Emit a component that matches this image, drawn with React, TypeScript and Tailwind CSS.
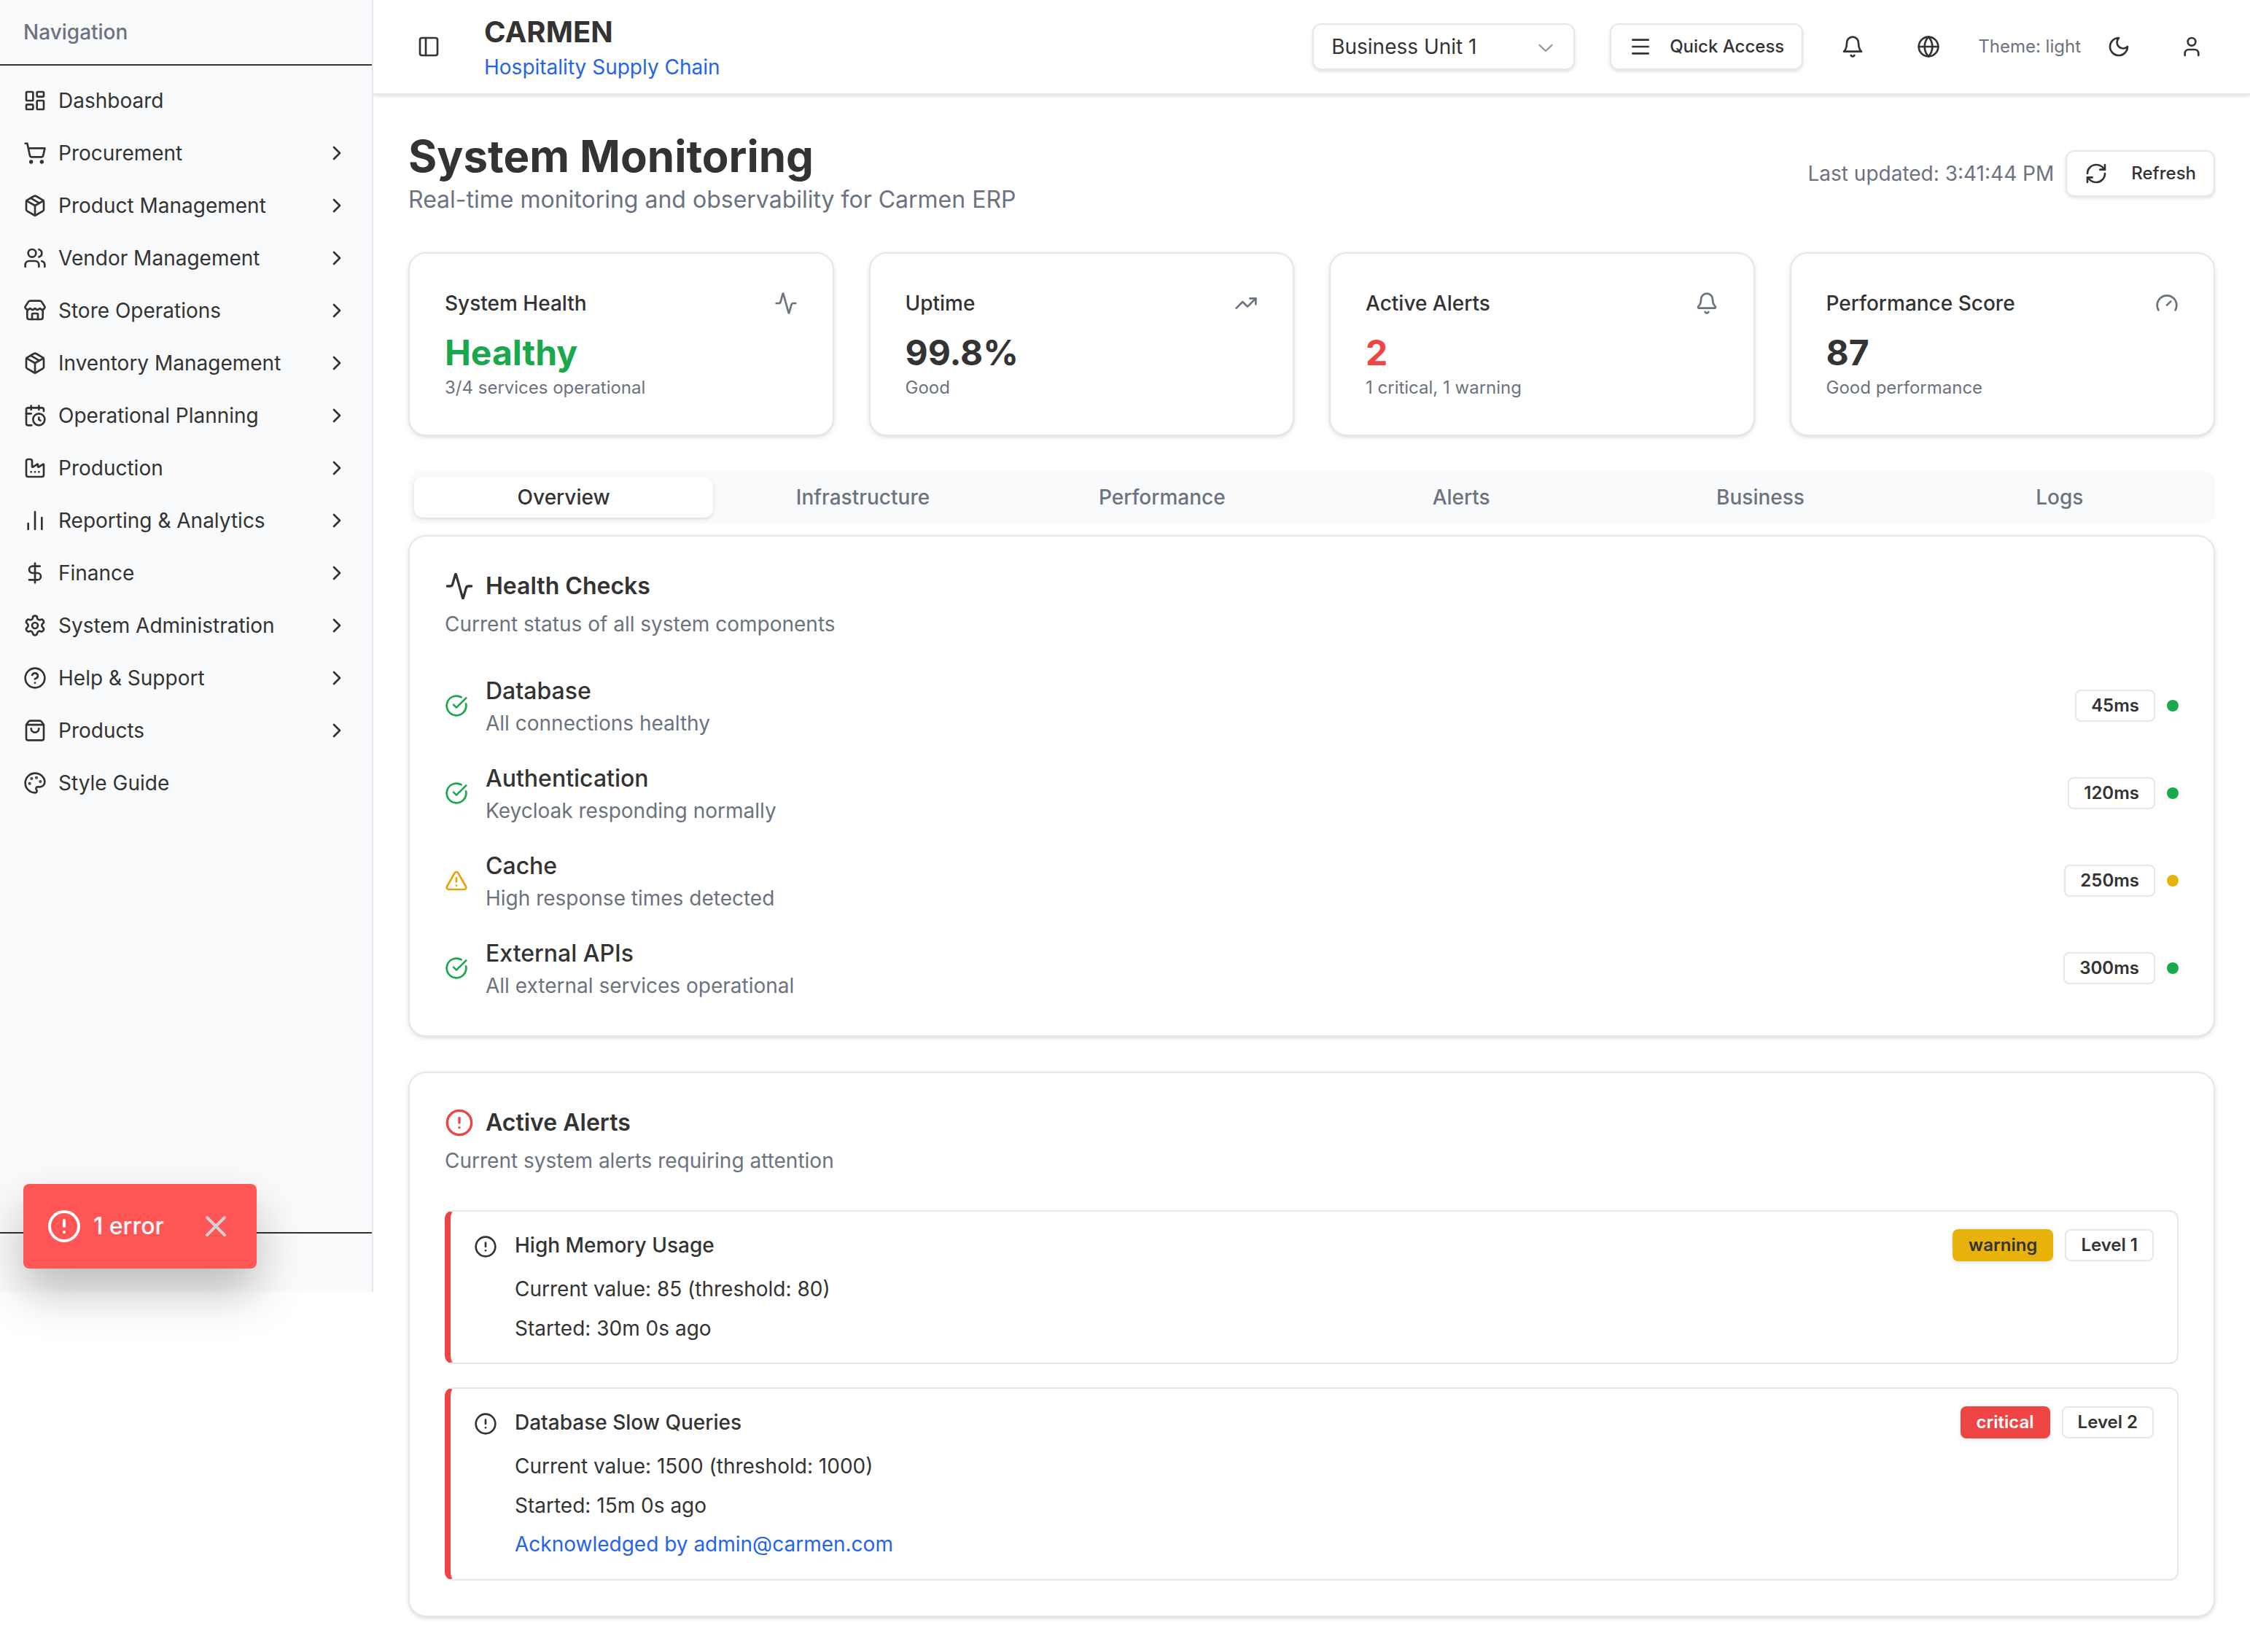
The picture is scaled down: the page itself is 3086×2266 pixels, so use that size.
import type { ReactNode } from "react";
import {
  Activity,
  Bell,
  CalendarClock,
  ChartNoAxesColumn,
  ChevronRight,
  CircleAlert,
  CircleCheckBig,
  CircleHelp,
  DollarSign,
  Factory,
  Gauge,
  Globe,
  LayoutDashboard,
  Menu,
  Moon,
  Package,
  Palette,
  PanelLeft,
  RefreshCw,
  Settings,
  ShoppingBag,
  ShoppingCart,
  Store,
  TrendingUp,
  TriangleAlert,
  User,
  Users,
  X,
} from "lucide-react";

type Icon = typeof Activity;

const navItems: { label: string; icon: Icon; expandable: boolean }[] = [
  { label: "Dashboard", icon: LayoutDashboard, expandable: false },
  { label: "Procurement", icon: ShoppingCart, expandable: true },
  { label: "Product Management", icon: Package, expandable: true },
  { label: "Vendor Management", icon: Users, expandable: true },
  { label: "Store Operations", icon: Store, expandable: true },
  { label: "Inventory Management", icon: Package, expandable: true },
  { label: "Operational Planning", icon: CalendarClock, expandable: true },
  { label: "Production", icon: Factory, expandable: true },
  { label: "Reporting & Analytics", icon: ChartNoAxesColumn, expandable: true },
  { label: "Finance", icon: DollarSign, expandable: true },
  { label: "System Administration", icon: Settings, expandable: true },
  { label: "Help & Support", icon: CircleHelp, expandable: true },
  { label: "Products", icon: ShoppingBag, expandable: true },
  { label: "Style Guide", icon: Palette, expandable: false },
];

const stats: { title: string; value: string; note: string; icon: Icon; tone: string }[] = [
  { title: "System Health", value: "Healthy", note: "3/4 services operational", icon: Activity, tone: "text-[#1aa84d]" },
  { title: "Uptime", value: "99.8%", note: "Good", icon: TrendingUp, tone: "text-[#333333]" },
  { title: "Active Alerts", value: "2", note: "1 critical, 1 warning", icon: Bell, tone: "text-[#ef4444]" },
  { title: "Performance Score", value: "87", note: "Good performance", icon: Gauge, tone: "text-[#333333]" },
];

const tabs = ["Overview", "Infrastructure", "Performance", "Alerts", "Business", "Logs"];

const checks = [
  { name: "Database", note: "All connections healthy", latency: "45ms", ok: true },
  { name: "Authentication", note: "Keycloak responding normally", latency: "120ms", ok: true },
  { name: "Cache", note: "High response times detected", latency: "250ms", ok: false },
  { name: "External APIs", note: "All external services operational", latency: "300ms", ok: true },
];

const alerts = [
  {
    title: "High Memory Usage",
    value: "Current value: 85 (threshold: 80)",
    started: "Started: 30m 0s ago",
    acknowledged: "",
    severity: "warning",
    severityStyle: "bg-[#e8b20a] text-[#333333]",
    level: "Level 1",
  },
  {
    title: "Database Slow Queries",
    value: "Current value: 1500 (threshold: 1000)",
    started: "Started: 15m 0s ago",
    acknowledged: "Acknowledged by admin@carmen.com",
    severity: "critical",
    severityStyle: "bg-[#ef4444] text-white",
    level: "Level 2",
  },
];

function Sidebar() {
  return (
    <aside className="relative flex h-[1772px] w-[512px] shrink-0 flex-col border-r-2 border-[#e5e7eb] bg-[#f9fafb]">
      <div className="border-b-2 border-[#333333] px-8 py-6 text-[28px] leading-10 font-medium text-[#6b7280]">
        Navigation
      </div>
      <nav className="flex flex-1 flex-col gap-2 p-4">
        {navItems.map(({ label, icon: ItemIcon, expandable }) => (
          <a key={label} href="#" className="flex h-16 items-center gap-4 px-4 text-[28px] leading-10">
            <ItemIcon className="size-8" />
            <span className="flex-1">{label}</span>
            {expandable && <ChevronRight className="size-8" />}
          </a>
        ))}
      </nav>
      <div className="h-[82px] border-t-2 border-[#333333]" />
      <div
        role="status"
        className="absolute bottom-8 left-8 flex h-[116px] w-80 items-center gap-4 rounded-lg bg-[#ff5555] pl-8 text-[32px] leading-12 font-medium text-white shadow-[0_32px_64px_rgba(0,0,0,0.25)]"
      >
        <CircleAlert className="size-12" />
        <span className="flex-1">1 error</span>
        <button type="button" aria-label="Dismiss error" className="pr-8 text-[#d1d1d1]">
          <X className="size-12" />
        </button>
      </div>
    </aside>
  );
}

function IconButton({ label, className, children }: { label: string; className: string; children: ReactNode }) {
  return (
    <button type="button" aria-label={label} className={`flex items-center justify-center ${className}`}>
      {children}
    </button>
  );
}

function Header() {
  return (
    <header className="flex h-[130px] items-center border-b-2 border-[#e5e7eb] px-12 shadow-[0_2px_4px_rgba(0,0,0,0.12)]">
      <IconButton label="Toggle sidebar" className="size-14">
        <PanelLeft className="size-8" />
      </IconButton>
      <div className="ml-12">
        <div className="text-[40px] leading-14 font-bold">CARMEN</div>
        <a href="#" className="block text-[28px] leading-10 text-[#2563eb]">
          Hospitality Supply Chain
        </a>
      </div>
      <div className="ml-auto flex items-center gap-8">
        <div className="relative mr-4">
          <select
            aria-label="Business unit"
            className="h-16 w-[360px] appearance-none rounded-xl border-2 border-[#e5e7eb] bg-white px-6 text-[28px] shadow-[0_2px_4px_rgba(0,0,0,0.12)]"
          >
            <option>Business Unit 1</option>
          </select>
          <svg
            viewBox="0 0 15 15"
            fill="currentColor"
            aria-hidden="true"
            className="pointer-events-none absolute top-4 right-6 size-8 opacity-50"
          >
            <path
              fillRule="evenodd"
              clipRule="evenodd"
              d="M3.13523 6.15803C3.3241 5.95657 3.64052 5.94637 3.84197 6.13523L7.5 9.56464L11.158 6.13523C11.3595 5.94637 11.6759 5.95657 11.8648 6.15803C12.0536 6.35949 12.0434 6.67591 11.842 6.86477L7.84197 10.6148C7.64964 10.7951 7.35036 10.7951 7.15803 10.6148L3.15803 6.86477C2.95657 6.67591 2.94637 6.35949 3.13523 6.15803Z"
            />
          </svg>
        </div>
        <button
          type="button"
          className="flex h-16 items-center gap-6 rounded-xl border-2 border-[#e5e7eb] px-6 text-2xl font-medium shadow-[0_2px_4px_rgba(0,0,0,0.12)]"
        >
          <Menu className="size-8" />
          Quick Access
        </button>
        <IconButton label="Notifications" className="size-18">
          {/* Bell whose body flares straight into a flat rim */}
          <svg
            viewBox="0 0 24 24"
            fill="none"
            stroke="currentColor"
            strokeWidth="2"
            strokeLinecap="round"
            strokeLinejoin="round"
            className="size-8"
          >
            <path d="M6 8a6 6 0 0 1 12 0c0 7 3 9 3 9H3s3-2 3-9" />
            <path d="M10.3 21a1.94 1.94 0 0 0 3.4 0" />
          </svg>
        </IconButton>
        <IconButton label="Language" className="size-18">
          <Globe className="size-8" />
        </IconButton>
        <div className="flex items-center gap-4">
          <span className="text-2xl text-[#6b7280]">Theme: light</span>
          <IconButton label="Toggle theme" className="size-18">
            <svg
              viewBox="0 0 24 24"
              fill="none"
              stroke="currentColor"
              strokeWidth="2"
              strokeLinecap="round"
              strokeLinejoin="round"
              className="size-8"
            >
              <path d="M12 3a6 6 0 0 0 9 9 9 9 0 1 1-9-9Z" />
            </svg>
          </IconButton>
        </div>
        <IconButton label="Account" className="size-16">
          <User className="size-8" />
        </IconButton>
      </div>
    </header>
  );
}

function Card({ className, children }: { className: string; children: ReactNode }) {
  return (
    <section
      className={`rounded-3xl border-2 border-[#e5e7eb] bg-white p-12 shadow-[0_2px_6px_rgba(0,0,0,0.1),0_2px_4px_-2px_rgba(0,0,0,0.1)] ${className}`}
    >
      {children}
    </section>
  );
}

function CardHeading({ icon, title, note }: { icon: ReactNode; title: string; note: string }) {
  return (
    <div className="mb-12 flex flex-col gap-3">
      <h2 className="flex items-center gap-4 text-[32px] leading-10 font-semibold">
        {icon}
        {title}
      </h2>
      <p className="text-[28px] leading-10 text-[#6b7280]">{note}</p>
    </div>
  );
}

function Badge({ className, children }: { className: string; children: ReactNode }) {
  return (
    <span className={`rounded-lg border-2 px-5 py-1 text-2xl font-semibold ${className}`}>
      {children}
    </span>
  );
}

export default function App() {
  return (
    <div className="flex min-h-screen items-start bg-white font-['Inter',sans-serif] text-[#333333]">
      <Sidebar />
      <div className="min-w-0 flex-1">
        <Header />
        <main className="p-12">
          <div className="mb-12 flex items-center justify-between">
            <div>
              <h1 className="text-6xl leading-18 font-bold">System Monitoring</h1>
              <p className="text-[32px] leading-12 text-[#6b7280]">
                Real-time monitoring and observability for Carmen ERP
              </p>
            </div>
            <div className="flex items-center gap-4">
              <span className="text-[28px] leading-10 text-[#6b7280]">Last updated: 3:41:44 PM</span>
              <button
                type="button"
                className="flex h-16 items-center gap-8 rounded-xl border-2 border-[#e5e7eb] px-6 text-2xl font-medium shadow-[0_2px_4px_rgba(0,0,0,0.12)]"
              >
                <RefreshCw className="size-8" />
                Refresh
              </button>
            </div>
          </div>

          <div className="mb-12 grid grid-cols-4 gap-12">
            {stats.map(({ title, value, note, icon: StatIcon, tone }) => (
              <Card key={title} className="">
                <div className="mb-4 flex items-center justify-between">
                  <h3 className="text-[28px] leading-10 font-medium">{title}</h3>
                  <StatIcon className="size-8 text-[#6b7280]" />
                </div>
                <div className={`text-5xl leading-16 font-bold ${tone}`}>{value}</div>
                <p className="text-2xl text-[#6b7280]">{note}</p>
              </Card>
            ))}
          </div>

          <div role="tablist" className="mb-4 grid h-18 grid-cols-6 rounded-2xl bg-[#f9fafb] p-2 text-[28px] font-medium">
            {tabs.map((tab, index) => (
              <button
                key={tab}
                type="button"
                role="tab"
                aria-selected={index === 0}
                className={
                  index === 0
                    ? "rounded-xl bg-white shadow-[0_2px_6px_rgba(0,0,0,0.1),0_2px_4px_-2px_rgba(0,0,0,0.1)]"
                    : "rounded-xl text-[#6b7280]"
                }
              >
                {tab}
              </button>
            ))}
          </div>

          <Card className="mb-12">
            <CardHeading
              icon={<Activity className="size-10" />}
              title="Health Checks"
              note="Current status of all system components"
            />
            <ul className="flex flex-col gap-8">
              {checks.map(({ name, note, latency, ok }) => (
                <li key={name} className="flex items-center gap-6">
                  {ok ? (
                    <CircleCheckBig className="size-8 text-[#1aa84d]" />
                  ) : (
                    <TriangleAlert className="size-8 text-[#e3a30b]" />
                  )}
                  <div className="flex-1">
                    <div className="text-[32px] leading-12 font-medium">{name}</div>
                    <div className="text-[28px] leading-10 text-[#6b7280]">{note}</div>
                  </div>
                  <div className="flex items-center gap-4">
                    <Badge className="border-[#e5e7eb]">{latency}</Badge>
                    <span className={`size-4 rounded-full ${ok ? "bg-[#1aa84d]" : "bg-[#e8b20a]"}`} />
                  </div>
                </li>
              ))}
            </ul>
          </Card>

          <Card className="">
            <CardHeading
              icon={<CircleAlert className="size-10 text-[#ef4444]" />}
              title="Active Alerts"
              note="Current system alerts requiring attention"
            />
            <div className="flex flex-col gap-8">
              {alerts.map((alert) => (
                <div
                  key={alert.title}
                  role="alert"
                  className="flex items-start gap-6 rounded-xl border-2 border-l-8 border-[#e5e7eb] border-l-[#ef4444] px-8 py-6"
                >
                  <CircleAlert className="mt-2 size-8" />
                  <div className="flex-1">
                    <div className="flex items-center gap-4">
                      <h3 className="flex-1 text-[28px] leading-10 font-medium">{alert.title}</h3>
                      <Badge className={`border-transparent shadow-[0_2px_6px_rgba(0,0,0,0.1)] ${alert.severityStyle}`}>
                        {alert.severity}
                      </Badge>
                      <Badge className="border-[#e5e7eb]">{alert.level}</Badge>
                    </div>
                    <div className="mt-4 flex flex-col gap-2 text-[28px] leading-relaxed">
                      <p>{alert.value}</p>
                      <p>{alert.started}</p>
                      {alert.acknowledged && <p className="text-[#2563eb]">{alert.acknowledged}</p>}
                    </div>
                  </div>
                </div>
              ))}
            </div>
          </Card>
        </main>
      </div>
    </div>
  );
}
